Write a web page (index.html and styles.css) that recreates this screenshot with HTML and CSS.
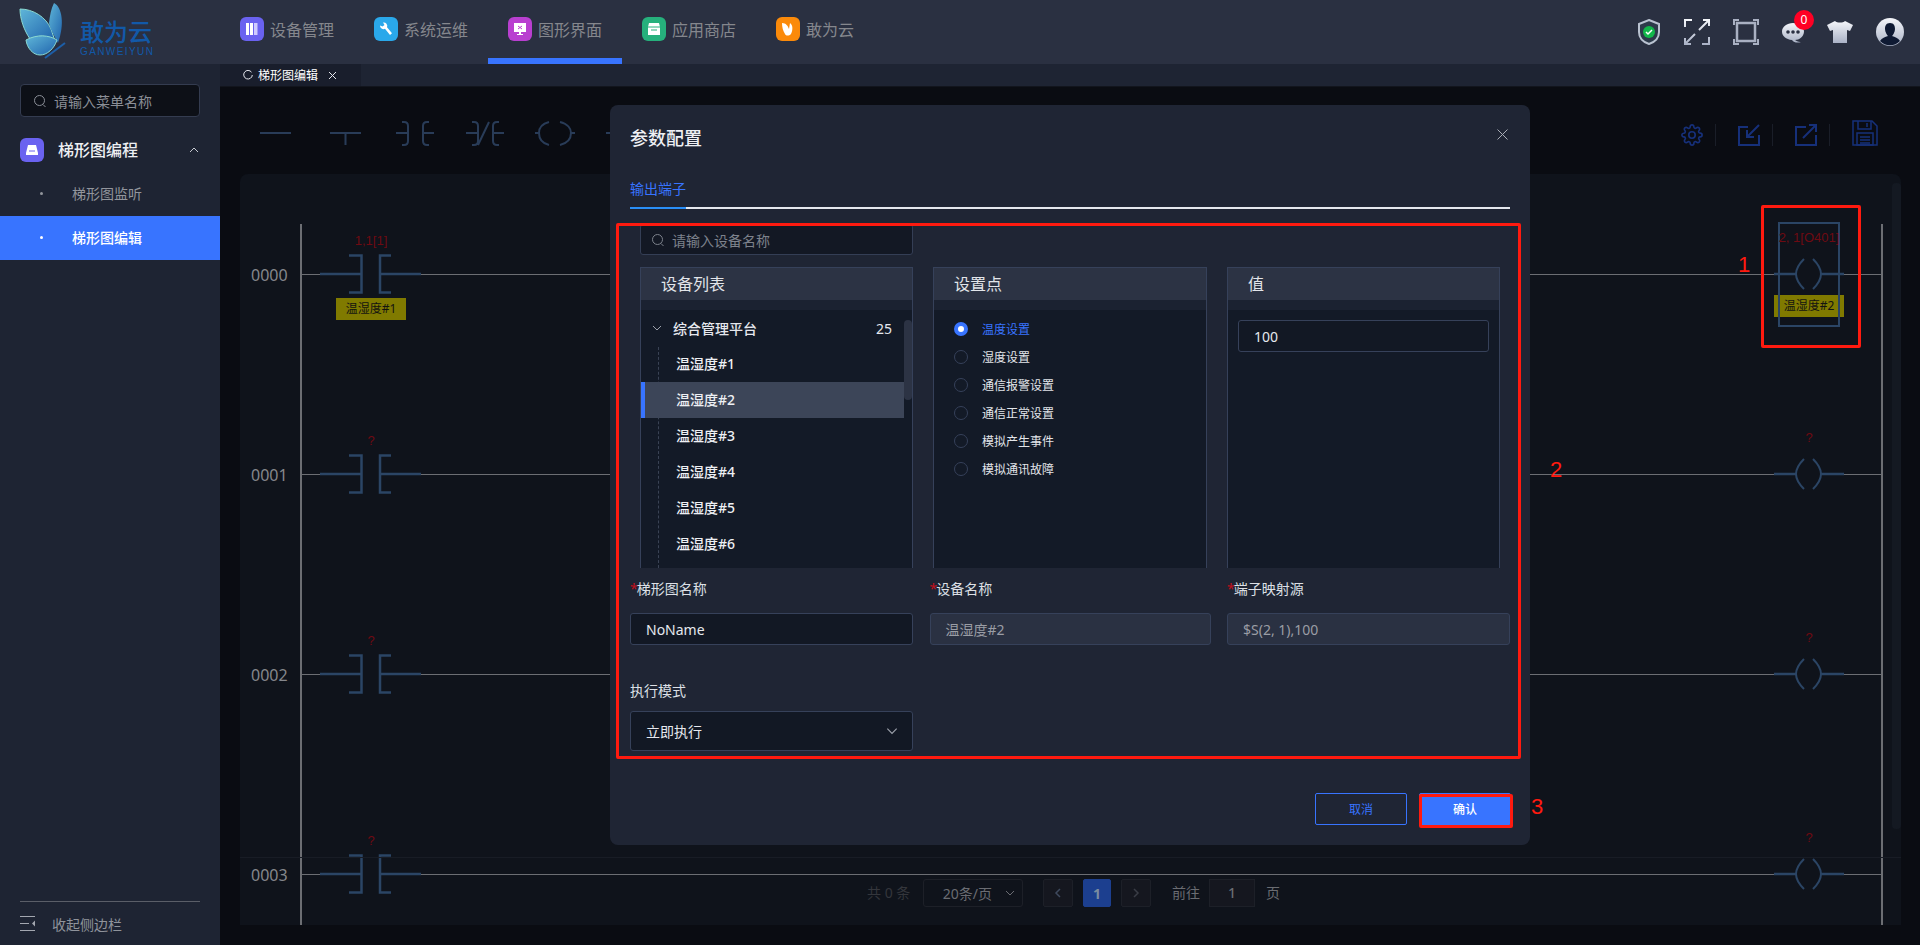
FILE: index.html
```html
<!DOCTYPE html>
<html lang="zh-CN">
<head>
<meta charset="utf-8">
<title>梯形图编辑</title>
<link rel="stylesheet" href="styles.css">
</head>
<body>
<svg class="defs" width="0" height="0" aria-hidden="true">
  <defs>
    <symbol id="contact" viewBox="0 0 101 40">
      <path d="M0 20H41M29 1.500H41.500V38.500H29M71 1.500H60V38.500H71M60 20H101" fill="none" stroke="#2b4565" stroke-width="2.500"/>
    </symbol>
    <symbol id="coil" viewBox="0 0 70 34">
      <path d="M0 17H22M47 17H70" fill="none" stroke="#2b4565" stroke-width="2.500"/>
      <path d="M30 2Q22 10 22 17T30 32M39 2Q47 10 47 17T39 32" fill="none" stroke="#2b4565" stroke-width="2"/>
    </symbol>
    <symbol id="chev-down" viewBox="0 0 12 12">
      <path d="M2 4l4 4 4-4" fill="none" stroke="currentColor" stroke-width="1"/>
    </symbol>
    <symbol id="search" viewBox="0 0 14 14">
      <circle cx="6.500" cy="6.500" r="5" fill="none" stroke="currentColor" stroke-width="1"/>
      <path d="M10 10.500l2.500 2.500" stroke="currentColor" stroke-width="1"/>
    </symbol>
    <linearGradient id="wing" x1="0" y1="0" x2="1" y2="1">
      <stop offset="0" stop-color="#5fb6d8"/><stop offset="1" stop-color="#1f63ad"/>
    </linearGradient>
    <linearGradient id="silver" x1="0" y1="0" x2="0" y2="1">
      <stop offset="0" stop-color="#f4f6fa"/><stop offset="1" stop-color="#aab2c6"/>
    </linearGradient>
  </defs>
</svg>

<div class="app">
  <header class="topbar">
    <div class="logo">
      <svg class="logo-mark" width="54" height="60" viewBox="0 0 54 60">
        <path d="M1 7C14 7 27 15 32 27L36 39C29 33 19 33 11 37C5 28 1 17 1 7Z" fill="url(#wing)" stroke="#8ad8d0" stroke-width="1"/>
        <path d="M35 1C43 5 46 22 39 41C35 33 31 27 30 21C31 13 32 7 35 1Z" fill="url(#wing)"/>
        <path d="M7 38C18 32 30 33 38 38C35 47 28 53 21 53C14 53 8 46 7 38Z" fill="url(#wing)" stroke="#8ad8d0" stroke-width="1"/>
        <path d="M46 41L26 56" stroke="#1c5ea8" stroke-width="2"/>
      </svg>
      <div class="logo-text">
        <span class="logo-cn">敢为云</span>
        <span class="logo-en">GANWEIYUN</span>
      </div>
    </div>
    <nav class="nav">
      <a class="nav-item">
        <span class="nav-icon purple"><svg width="16" height="16" viewBox="0 0 16 16"><path d="M2 2h3v12H2zM6 2h3v12H6z" fill="#fff"/><path d="M10 2h3.500v12H10z" fill="#cfcbff"/></svg></span>
        <span>设备管理</span>
      </a>
      <a class="nav-item">
        <span class="nav-icon sky"><svg width="16" height="16" viewBox="0 0 16 16"><path d="M2 4.500a3.500 3.500 0 0 0 5 3.300l5 6.200 2-1.700-5-6A3.500 3.500 0 0 0 5 1.500L6.500 4 4.500 5.500z" fill="#fff"/></svg></span>
        <span>系统运维</span>
      </a>
      <a class="nav-item active">
        <span class="nav-icon violet"><svg width="16" height="16" viewBox="0 0 16 16"><path d="M2 2h12v9H2zM7 11h2v2h2v1H5v-1h2z" fill="#fff"/><path d="M6 5l4 3M10 5L6 8" stroke="#b93fd0" stroke-width="1"/></svg></span>
        <span>图形界面</span>
      </a>
      <a class="nav-item">
        <span class="nav-icon green"><svg width="16" height="16" viewBox="0 0 16 16"><path d="M3 2h10l1 4v8H2V6z" fill="#fff"/><path d="M2 6h12M5 9h6" stroke="#26b07c" stroke-width="1"/></svg></span>
        <span>应用商店</span>
      </a>
      <a class="nav-item">
        <span class="nav-icon orange"><svg width="16" height="16" viewBox="0 0 16 16"><path d="M2 2c4 0 6 3 7 6l1-6c3 2 3 7 1 11-2 2-5 2-6 0C3 10 2 6 2 2z" fill="#fff"/></svg></span>
        <span>敢为云</span>
      </a>
    </nav>
    <div class="head-icons">
      <svg width="24" height="26" viewBox="0 0 24 26"><path d="M12 1l10 4v8c0 6-4 10-10 12C6 23 2 19 2 13V5z" fill="#2d3a4a" stroke="#b9c2d0" stroke-width="2"/><circle cx="12" cy="13" r="6" fill="#12b84a"/><path d="M9 13l2 2 4-4" fill="none" stroke="#fff" stroke-width="1.500"/></svg>
      <svg width="26" height="26" viewBox="0 0 26 26" fill="none" stroke="url(#silver)" stroke-width="2"><path d="M8 1H1V8M25 18V25H18M25 1L15 11M19 1H25V7M1 25L11 15M1 19V25H7"/></svg>
      <svg width="26" height="26" viewBox="0 0 26 26" fill="none" stroke="#a9b0c2" stroke-width="2"><path d="M1 6V1H6M20 1H25V6M25 20V25H20M6 25H1V20"/><rect x="4" y="4" width="18" height="18" stroke-width="2.500"/></svg>
      <span class="chat">
        <svg width="22" height="20" viewBox="0 0 22 20"><path d="M11 0c6 0 11 3.500 11 8.500S17 17 13 17c3 2 5 2 6 2-3 1-7 1-9-2C4 16.500 0 13 0 8.500S5 0 11 0z" fill="url(#silver)"/><circle cx="6" cy="9" r="1.800" fill="#2a3042"/><circle cx="11" cy="9" r="1.800" fill="#2a3042"/><circle cx="16" cy="9" r="1.800" fill="#2a3042"/></svg>
        <b class="badge">0</b>
      </span>
      <svg width="26" height="22" viewBox="0 0 26 22"><path d="M8 0c2 2 8 2 10 0l8 4-3 6-3-1v13H6V9l-3 1-3-6z" fill="url(#silver)"/></svg>
      <svg width="28" height="28" viewBox="0 0 28 28"><circle cx="14" cy="14" r="14" fill="url(#silver)"/><path d="M14 5c4 0 5 3 5 6s-2 6-3 7c3 1 6 2 8 5a14 14 0 0 1-20 0c2-3 5-4 8-5-1-1-3-4-3-7s1-6 5-6z" fill="#0f1a33"/></svg>
    </div>
  </header>

  <div class="body">
    <aside class="sidebar">
      <div class="side-search">
        <svg width="14" height="14"><use href="#search"/></svg>
        <span>请输入菜单名称</span>
      </div>
      <div class="menu-group">
        <span class="menu-icon"><svg width="14" height="12" viewBox="0 0 14 12"><path d="M3 1h8l2 8v2H1V9z" fill="#fff"/><path d="M4 7h6" stroke="#6a62f0"/></svg></span>
        <span class="menu-title">梯形图编程</span>
        <svg class="menu-chev" width="12" height="12" viewBox="0 0 12 12"><path d="M2 8l4-4 4 4" fill="none" stroke="#c6c9d0" stroke-width="1"/></svg>
      </div>
      <a class="menu-item"><i class="dot"></i>梯形图监听</a>
      <a class="menu-item current"><i class="dot"></i>梯形图编辑</a>
      <div class="side-foot">
        <svg width="15" height="15" viewBox="0 0 15 15" fill="none" stroke="#a3a7b0" stroke-width="1"><path d="M0 .5H15M0 7.500H9M0 14.500H15"/><path d="M15 4.500v6l-3-3z" fill="#a3a7b0" stroke="none"/></svg>
        <span>收起侧边栏</span>
      </div>
    </aside>

    <main class="main">
      <div class="tabbar">
        <div class="tab">
          <svg width="10" height="10" viewBox="0 0 10 10"><path d="M8.500 2.200A4.300 4.300 0 1 0 9.300 5" fill="none" stroke="#e6e8ee" stroke-width="1"/></svg>
          <span>梯形图编辑</span>
          <svg class="tab-x" width="9" height="9" viewBox="0 0 9 9"><path d="M1 1l7 7M8 1L1 8" stroke="#e6e8ee" stroke-width="1"/></svg>
        </div>
      </div>
      <div class="toolbar">
        <svg class="tool-strip" width="350" height="30" viewBox="0 0 350 30" fill="none" stroke="#293c58" stroke-width="2">
          <path d="M0 15H31"/>
          <path d="M70 15H101M85.500 15V27"/>
          <path d="M136 15H148M142 4h2c3 0 4 2 4 4V23c0 3-2 4-4 4h-2M174 15H163M169 4h-2c-3 0-4 2-4 4V23c0 3 2 4 4 4h2"/>
          <path d="M206 15H218M212 4h2c3 0 4 2 4 4V23c0 3-2 4-4 4h-2M244 15H233M239 4h-2c-3 0-4 2-4 4V23c0 3 2 4 4 4h2M218 27L229 4"/>
          <path d="M275 15H279M289 4C281 6 279 11 279 15C279 20 281 25 289 27M315 15H311M300 4C308 6 311 11 311 15C311 20 308 25 300 27"/>
          <path d="M346 15H350"/>
        </svg>
        <div class="tool-actions">
          <svg class="act" width="22" height="22" viewBox="0 0 24 24" fill="none" stroke="#16307a" stroke-width="1.800"><circle cx="12" cy="12" r="3.500"/><path d="M19.400 15a1.650 1.650 0 0 0 .33 1.820l.06.06a2 2 0 0 1 0 2.830 2 2 0 0 1-2.830 0l-.06-.06a1.650 1.650 0 0 0-1.820-.33 1.650 1.650 0 0 0-1 1.510V21a2 2 0 0 1-2 2 2 2 0 0 1-2-2v-.09A1.650 1.650 0 0 0 9 19.400a1.650 1.650 0 0 0-1.820.33l-.06.06a2 2 0 0 1-2.830 0 2 2 0 0 1 0-2.830l.06-.06a1.650 1.650 0 0 0 .33-1.820 1.650 1.650 0 0 0-1.510-1H3a2 2 0 0 1-2-2 2 2 0 0 1 2-2h.09A1.650 1.650 0 0 0 4.600 9a1.650 1.650 0 0 0-.33-1.820l-.06-.06a2 2 0 0 1 0-2.830 2 2 0 0 1 2.830 0l.06.06a1.650 1.650 0 0 0 1.820.33H9a1.650 1.650 0 0 0 1-1.510V3a2 2 0 0 1 2-2 2 2 0 0 1 2 2v.09a1.650 1.650 0 0 0 1 1.510 1.650 1.650 0 0 0 1.820-.33l.06-.06a2 2 0 0 1 2.830 0 2 2 0 0 1 0 2.830l-.06.06a1.650 1.650 0 0 0-.33 1.820V9a1.650 1.650 0 0 0 1.510 1H21a2 2 0 0 1 2 2 2 2 0 0 1-2 2h-.09a1.650 1.650 0 0 0-1.510 1z"/></svg>
          <i class="act-sep"></i>
          <svg class="act" width="22" height="22" viewBox="0 0 22 22" fill="none" stroke="#16307a" stroke-width="2"><path d="M10 3H1V21H21V11"/><path d="M21 1L9 13M9 6V13H16"/></svg>
          <i class="act-sep"></i>
          <svg class="act" width="22" height="22" viewBox="0 0 22 22" fill="none" stroke="#16307a" stroke-width="2"><path d="M11 3H1V21H21V11"/><path d="M8 14L21 1M14 1H21V8"/></svg>
          <i class="act-sep"></i>
          <svg class="act save" width="26" height="26" viewBox="0 0 26 26" fill="none" stroke="#16307a" stroke-width="1.500"><path d="M1 1H20L25 6V25H1Z"/><path d="M6 1V9H19V1M15 3V7M5 13H21V25H5ZM8 17H18M8 20H18M8 23H18"/></svg>
        </div>
      </div>
      <section class="card">
        <div class="ladder">
          <div class="rung">
            <span class="rung-no">0000</span><i class="wire"></i>
            <span class="addr on-contact">1,1[1]</span>
            <svg class="contact" width="101" height="40"><use href="#contact"/></svg>
            <span class="dev on-contact">温湿度#1</span>
            <i class="selection"></i>
            <span class="addr on-coil">2, 1[O401]</span>
            <svg class="coil" width="70" height="34"><use href="#coil"/></svg>
            <span class="dev on-coil">温湿度#2</span>
          </div>
          <div class="rung">
            <span class="rung-no">0001</span><i class="wire"></i>
            <span class="addr on-contact">?</span>
            <svg class="contact" width="101" height="40"><use href="#contact"/></svg>
            <span class="addr on-coil">?</span>
            <svg class="coil" width="70" height="34"><use href="#coil"/></svg>
          </div>
          <div class="rung">
            <span class="rung-no">0002</span><i class="wire"></i>
            <span class="addr on-contact">?</span>
            <svg class="contact" width="101" height="40"><use href="#contact"/></svg>
            <span class="addr on-coil">?</span>
            <svg class="coil" width="70" height="34"><use href="#coil"/></svg>
          </div>
          <div class="rung">
            <span class="rung-no">0003</span><i class="wire"></i>
            <span class="addr on-contact">?</span>
            <svg class="contact" width="101" height="40"><use href="#contact"/></svg>
            <span class="addr on-coil">?</span>
            <svg class="coil" width="70" height="34"><use href="#coil"/></svg>
          </div>
        </div>
        <i class="card-scroll"></i>
        <div class="pager">
          <span class="pg-total">共 0 条</span>
          <span class="pg-size">20条/页<svg width="12" height="12"><use href="#chev-down"/></svg></span>
          <span class="pg-btn first"><svg width="12" height="12" viewBox="0 0 12 12"><path d="M8 2L4 6l4 4" fill="none" stroke="#3f4a5e" stroke-width="1.500"/></svg></span>
          <span class="pg-btn cur">1</span>
          <span class="pg-btn"><svg width="12" height="12" viewBox="0 0 12 12"><path d="M4 2l4 4-4 4" fill="none" stroke="#3a3d46" stroke-width="1.500"/></svg></span>
          <span class="pg-text goto">前往</span>
          <span class="pg-input">1</span>
          <span class="pg-text">页</span>
        </div>
      </section>
    </main>
  </div>

  <div class="dialog">
    <div class="dlg-head">
      <h2>参数配置</h2>
      <svg class="dlg-x" width="11" height="11" viewBox="0 0 11 11"><path d="M.5.500l10 10M10.500.500l-10 10" stroke="#a9adb6" stroke-width="1"/></svg>
    </div>
    <div class="dlg-tabs"><span class="dlg-tab">输出端子</span></div>
    <div class="dlg-search">
      <svg width="14" height="14"><use href="#search"/></svg>
      <span>请输入设备名称</span>
    </div>
    <div class="panels">
      <div class="panel">
        <div class="panel-head">设备列表</div>
        <div class="panel-body tree">
          <div class="tree-root"><svg width="12" height="12"><use href="#chev-down"/></svg><span>综合管理平台</span><em>25</em></div>
          <div class="tree-leaf">温湿度#1</div>
          <div class="tree-leaf picked">温湿度#2</div>
          <div class="tree-leaf">温湿度#3</div>
          <div class="tree-leaf">温湿度#4</div>
          <div class="tree-leaf">温湿度#5</div>
          <div class="tree-leaf">温湿度#6</div>
          <i class="tree-thumb"></i>
        </div>
      </div>
      <div class="panel">
        <div class="panel-head">设置点</div>
        <div class="panel-body radios">
          <div class="radio checked"><i></i>温度设置</div>
          <div class="radio"><i></i>湿度设置</div>
          <div class="radio"><i></i>通信报警设置</div>
          <div class="radio"><i></i>通信正常设置</div>
          <div class="radio"><i></i>模拟产生事件</div>
          <div class="radio"><i></i>模拟通讯故障</div>
        </div>
      </div>
      <div class="panel">
        <div class="panel-head">值</div>
        <div class="panel-body values">
          <div class="field value">100</div>
        </div>
      </div>
    </div>
    <div class="form-grid">
      <div class="form-col"><label><b>*</b>梯形图名称</label><div class="field">NoName</div></div>
      <div class="form-col"><label><b>*</b>设备名称</label><div class="field off">温湿度#2</div></div>
      <div class="form-col"><label><b>*</b>端子映射源</label><div class="field off">$S(2, 1),100</div></div>
    </div>
    <div class="exec">
      <label>执行模式</label>
      <div class="field select">立即执行<svg width="14" height="14"><use href="#chev-down"/></svg></div>
    </div>
    <div class="dlg-foot">
      <button class="btn ghost">取消</button>
      <button class="btn primary">确认</button>
    </div>
    <i class="mark mark-form"></i>
    <i class="mark mark-ok"></i>
  </div>

  <i class="mark mark-coil"></i>
  <span class="note n1">1</span>
  <span class="note n2">2</span>
  <span class="note n3">3</span>
</div>
</body>
</html>
```

FILE: styles.css
```css
* { box-sizing: border-box; }
html, body { margin: 0; height: 100%; }
body {
  background: #0a0c12;
  color: #e6e8ee;
  font-family: "Noto Sans", "Noto Sans CJK SC", sans-serif;
  font-size: 14px;
  overflow: hidden;
}
i, em { font-style: normal; }
.defs { position: absolute; }
.app { position: relative; display: flex; flex-direction: column; height: 945px; width: 1920px; overflow: hidden; }

/* top bar */
.topbar { flex: 0 0 64px; display: flex; align-items: stretch; background: #2a3041; }
.logo { width: 220px; display: flex; align-items: center; padding-left: 19px; }
.logo-mark { flex: none; }
.logo-text { display: flex; flex-direction: column; margin-left: 7px; margin-top: 11px; color: #1259a8; }
.logo-cn { font-size: 24px; line-height: 28px; font-weight: 500; }
.logo-en { font-size: 10px; line-height: 12px; letter-spacing: 1.400px; font-family: "Liberation Sans", sans-serif; }
.nav { display: flex; }
.nav-item { width: 134px; padding: 4px 0 4px 20px; display: flex; align-items: center; gap: 6px; font-size: 16px; color: #85878d; border-bottom: 6px solid transparent; }
.nav-item.active { border-bottom-color: #3874ff; }
.nav-icon { width: 24px; height: 24px; border-radius: 6px; display: flex; align-items: center; justify-content: center; }
.purple { background: #6a62f0; }
.sky { background: #2aa8ea; }
.violet { background: #b93fd0; }
.green { background: #26b07c; }
.orange { background: #fb8a0a; }
.head-icons { margin-left: auto; padding-right: 16px; display: flex; align-items: center; gap: 23px; }
.chat { position: relative; display: flex; padding-top: 2px; }
.badge { position: absolute; left: 12px; top: -11px; width: 20px; height: 20px; border-radius: 50%; background: #ff0024; color: #fff; font-size: 12px; font-weight: 400; line-height: 20px; text-align: center; }

/* layout */
.body { flex: 1; display: flex; min-height: 0; }
.sidebar { flex: 0 0 220px; display: flex; flex-direction: column; background: #1e2433; }
.side-search { margin: 20px 20px 10px; height: 33px; display: flex; align-items: center; gap: 7px; padding-left: 12px; background: #0d1017; border: 1px solid #343c50; border-radius: 4px; color: #8b8f97; }
.menu-group { flex: 0 0 45px; display: flex; align-items: center; padding: 0 20px; }
.menu-icon { width: 24px; height: 24px; border-radius: 6px; background: #6a62f0; display: flex; align-items: center; justify-content: center; }
.menu-title { margin: -2px 0 0 14px; font-size: 16px; font-weight: 500; color: #eef0f4; }
.menu-chev { margin-left: auto; }
.menu-item { flex: 0 0 44px; display: flex; align-items: center; padding: 0 0 2px 40px; color: #92959c; }
.menu-item .dot { width: 3px; height: 3px; border-radius: 50%; background: #92959c; margin-right: 29px; }
.menu-item.current { background: #3874ff; color: #fff; font-weight: 500; }
.menu-item.current .dot { background: #fff; }
.side-foot { margin: auto 20px 0; height: 44px; border-top: 1px solid #5a5e68; display: flex; align-items: center; gap: 17px; color: #8f939b; }

.main { flex: 1; min-width: 0; display: flex; flex-direction: column; }
.tabbar { flex: 0 0 23px; background: #1e2433; display: flex; border-bottom: 1px solid #12151d; }
.tab { width: 141px; display: flex; align-items: center; padding-left: 23px; gap: 5px; background: #191e2c; font-size: 12px; color: #fff; }
.tab-x { margin-left: 5px; }
.toolbar { flex: 0 0 87px; display: flex; align-items: center; padding: 5px 42px 0 40px; }
.tool-strip { overflow: visible; }
.tool-actions { margin-left: auto; padding-top: 3px; display: flex; align-items: center; }
.act-sep { width: 1px; height: 22px; background: #1a1e28; margin: 0 22px 0 12px; }
.act.save { margin-top: -3px; }

/* ladder card */
.card { position: relative; flex: 1; margin: 0 19px 20px 20px; background: #0f131b; border-radius: 8px 8px 0 0; overflow: hidden; padding-top: 50px; }
.ladder { display: flex; flex-direction: column; margin-left: 60px; width: 1583px; height: 701px; border-left: 2px solid #6c6e73; border-right: 2px solid #6c6e73; }
.rung { position: relative; flex: 0 0 200px; }
.wire { position: absolute; left: 0; right: 0; top: 50px; height: 1px; background: #6c6e73; }
.rung-no { position: absolute; left: -51px; top: 41px; font-size: 16px; line-height: 20px; color: #85878c; }
.addr { position: absolute; z-index: 2; top: 7px; width: 70px; text-align: center; font-family: "Liberation Sans", sans-serif; font-size: 13px; line-height: 20px; color: #6e0a12; white-space: nowrap; }
.dev { position: absolute; top: 74px; width: 70px; height: 22px; background: #807a00; color: #141410; font-size: 12px; line-height: 22px; text-align: center; white-space: nowrap; }
.contact, .coil { position: absolute; background: #0f131b; }
.contact { left: 18px; top: 30px; }
.coil { left: 1472px; top: 33px; }
.on-contact { left: 34px; }
.on-coil { left: 1472px; }
.addr.on-coil { top: 4px; }
.dev.on-coil { top: 71px; }
.selection { position: absolute; left: 1476px; top: -2px; width: 62px; height: 105px; border: 2px solid #2b4565; z-index: 1; }
.card-scroll { position: absolute; top: 9px; right: 0; width: 9px; height: 646px; background: #141922; border-radius: 4px; }
.pager { position: absolute; left: 0; right: 0; bottom: 0; height: 68px; padding: 21px 0 0 627px; border-top: 1px solid #181c25; display: flex; align-items: flex-start; font-size: 14px; color: #6a6c72; }
.pg-total { width: 56px; line-height: 28px; color: #34363c; }
.pg-size { width: 100px; height: 28px; border: 1px solid #1d2028; border-radius: 3px; display: flex; align-items: center; justify-content: flex-end; gap: 12px; padding-right: 6px; color: #6a6c72; }
.pg-btn { margin-left: 10px; width: 30px; height: 28px; background: #15171f; border: 1px solid #1d2028; border-radius: 2px; display: flex; align-items: center; justify-content: center; }
.pg-btn.first { margin-left: 20px; }
.pg-btn.cur { width: 28px; background: #1c3f8f; border-color: #1c3f8f; color: #7a8da0; font-weight: 700; }
.pg-text { line-height: 28px; }
.pg-text.goto { margin-left: 21px; margin-right: 9px; }
.pg-input { width: 46px; height: 28px; margin-right: 11px; background: #15171f; border: 1px solid #1d2028; line-height: 26px; text-align: center; font-weight: 500; }

/* dialog */
.dialog { position: absolute; left: 610px; top: 105px; width: 920px; height: 740px; background: #1f2534; border-radius: 8px; display: flex; flex-direction: column; padding: 0 20px; }
.dialog > * { min-height: 0; }
.dlg-head { position: relative; flex: 0 0 69px; padding-top: 20px; }
.dlg-head h2 { margin: 0; font-size: 18px; line-height: 26px; font-weight: 500; color: #eef0f4; }
.dlg-x { position: absolute; right: 2px; top: 24px; }
.dlg-tabs { flex: 0 0 35px; padding-top: 5px; border-bottom: 2px solid #e4e7ed; display: flex; align-items: flex-start; }
.dlg-tab { height: 30px; line-height: 20px; border-bottom: 2px solid #2a8ff7; color: #3874ff; }
.dlg-search { flex: 0 0 31px; margin: 15px 0 0 10px; width: 273px; display: flex; align-items: center; gap: 7px; padding-left: 10px; background: #131824; border: 1px solid #343e55; border-radius: 3px; color: #7d828c; }
.panels { flex: 0 0 301px; margin: 12px 10px 0; display: grid; grid-template-columns: 273px 274px 273px; grid-template-rows: 301px; column-gap: 20px; }
.panel { display: flex; flex-direction: column; min-height: 0; border: 1px solid #36415a; border-bottom: 0; background: #131a27; overflow: hidden; }
.panel-head { flex: 0 0 32px; padding-left: 20px; background: #2c3344; font-size: 16px; line-height: 32px; color: #e2e5ea; }
.panel-body { flex: 1; border-top: 10px solid #1b2231; min-height: 0; }
.tree { position: relative; padding-right: 8px; overflow: hidden; }
.tree::before { content: ""; position: absolute; left: 17px; top: 37px; bottom: 0; border-left: 1px dashed #3a4355; }
.tree-root { position: relative; height: 36px; display: flex; align-items: center; padding: 0 0 0 10px; font-weight: 500; color: #e6e8ee; }
.tree-root svg { color: #9ca1ab; margin-right: 10px; }
.tree-root em { margin-left: auto; margin-right: 12px; font-weight: 400; }
.tree-leaf { position: relative; height: 36px; line-height: 36px; padding-left: 35px; font-weight: 500; color: #eef0f4; }
.tree-leaf.picked { background: #3c4558; border-left: 4px solid #3874ff; padding-left: 31px; }
.tree-thumb { position: absolute; right: 0; top: 10px; width: 8px; height: 80px; background: #2c3344; border-radius: 4px; }
.radios { padding: 5px 0 0 20px; }
.radio { height: 28px; display: flex; align-items: center; font-size: 12px; color: #e2e5ea; gap: 14px; }
.radio i { width: 14px; height: 14px; border-radius: 50%; border: 1px solid #36415a; background: #131a27; }
.radio.checked { color: #3874ff; }
.radio.checked i { border: 4px solid #3874ff; background: #fff; }
.values { padding: 10px 10px 0 10px; }
.field { height: 32px; display: flex; align-items: center; padding-left: 15px; background: #121824; border: 1px solid #36415a; border-radius: 3px; color: #e6e8ee; }
.field.off { background: #2a3142; color: #9a9da5; }
.form-grid { flex: 0 0 66px; margin-top: 11px; display: grid; grid-template-columns: 283px 281px 283px; column-gap: 16.500px; }
.form-col label, .exec label { display: block; height: 20px; line-height: 20px; color: #dde0e6; margin-bottom: 14px; }
.form-col label b { color: #c0101c; font-weight: 400; margin-right: -1px; }
.exec { flex: 0 0 70px; margin-top: 36px; width: 283px; }
.exec label { margin-bottom: 10px; }
.field.select { height: 40px; justify-content: space-between; padding-right: 13px; }
.field.select svg { color: #9ca1ab; }
.dlg-foot { flex: 0 0 32px; margin: 42px -1px 0 0; display: flex; justify-content: flex-end; gap: 12px; }
.btn { width: 92px; height: 32px; border-radius: 2px; font: inherit; font-size: 12px; padding: 0; }
.btn.ghost { background: transparent; border: 1px solid #3874ff; color: #3874ff; }
.btn.primary { background: #3874ff; border: 1px solid #3874ff; color: #fff; font-weight: 500; }

/* annotations */
.mark { position: absolute; border: 3px solid #ff1a0f; border-radius: 2px; pointer-events: none; }
.mark-form { left: 6px; top: 118px; width: 905px; height: 536px; }
.mark-ok { left: 809px; top: 689px; width: 94px; height: 34px; }
.mark-coil { left: 1761px; top: 205px; width: 100px; height: 143px; }
.note { position: absolute; color: #ff1a0f; font-family: "Liberation Sans", sans-serif; font-size: 22px; line-height: 24px; }
.n1 { left: 1738px; top: 253px; }
.n2 { left: 1550px; top: 458px; }
.n3 { left: 1531px; top: 795px; }
```
